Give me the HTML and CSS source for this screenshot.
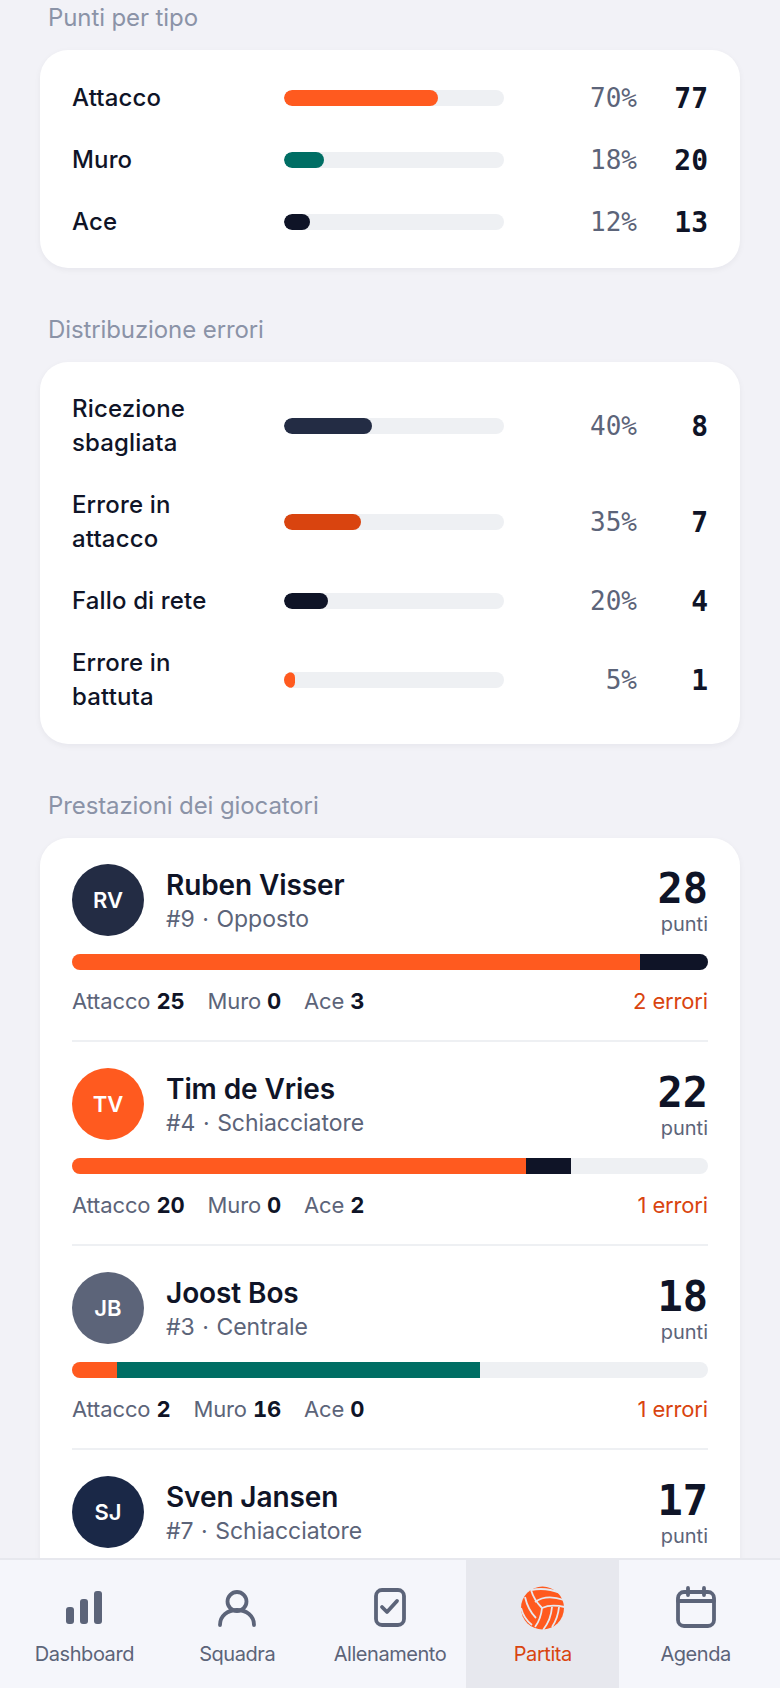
FILE: index.html
```html
<!DOCTYPE html>
<html>

<head>
    <title>Partita</title>
    <link rel="stylesheet" href="styles.css">
</head>

<body>
    <main class="page">
        <h2 class="section-title">Punti per tipo</h2>
        <section class="card stat-card short">
            <div class="stat-row">
                <span class="stat-label">Attacco</span>
                <span class="track"><span class="fill orange" style="width: 70%"></span></span>
                <span class="stat-pct">70%</span>
                <span class="stat-value">77</span>
            </div>
            <div class="stat-row">
                <span class="stat-label">Muro</span>
                <span class="track"><span class="fill teal" style="width: 18%"></span></span>
                <span class="stat-pct">18%</span>
                <span class="stat-value">20</span>
            </div>
            <div class="stat-row">
                <span class="stat-label">Ace</span>
                <span class="track"><span class="fill ink" style="width: 12%"></span></span>
                <span class="stat-pct">12%</span>
                <span class="stat-value">13</span>
            </div>
        </section>

        <h2 class="section-title">Distribuzione errori</h2>
        <section class="card stat-card">
            <div class="stat-row">
                <span class="stat-label">Ricezione sbagliata</span>
                <span class="track"><span class="fill navy" style="width: 40%"></span></span>
                <span class="stat-pct">40%</span>
                <span class="stat-value">8</span>
            </div>
            <div class="stat-row">
                <span class="stat-label">Errore in attacco</span>
                <span class="track"><span class="fill rust" style="width: 35%"></span></span>
                <span class="stat-pct">35%</span>
                <span class="stat-value">7</span>
            </div>
            <div class="stat-row">
                <span class="stat-label">Fallo di rete</span>
                <span class="track"><span class="fill ink" style="width: 20%"></span></span>
                <span class="stat-pct">20%</span>
                <span class="stat-value">4</span>
            </div>
            <div class="stat-row">
                <span class="stat-label">Errore in battuta</span>
                <span class="track"><span class="fill orange" style="width: 5%"></span></span>
                <span class="stat-pct">5%</span>
                <span class="stat-value">1</span>
            </div>
        </section>

        <h2 class="section-title">Prestazioni dei giocatori</h2>
        <section class="card player-card">
            <article class="player">
                <div class="player-head">
                    <span class="avatar av-navy">RV</span>
                    <div class="player-info">
                        <div class="player-name">Ruben Visser</div>
                        <div class="player-role">#9 · Opposto</div>
                    </div>
                    <div class="player-points">
                        <div class="points-num">28</div>
                        <div class="points-label">punti</div>
                    </div>
                </div>
                <div class="split-bar">
                    <span class="orange" style="width: 89.3%"></span>
                    <span class="ink" style="width: 10.7%"></span>
                </div>
                <div class="player-stats">
                    <span>Attacco <b>25</b></span>
                    <span>Muro <b>0</b></span>
                    <span>Ace <b>3</b></span>
                    <span class="errors">2 errori</span>
                </div>
            </article>
            <article class="player">
                <div class="player-head">
                    <span class="avatar orange">TV</span>
                    <div class="player-info">
                        <div class="player-name">Tim de Vries</div>
                        <div class="player-role">#4 · Schiacciatore</div>
                    </div>
                    <div class="player-points">
                        <div class="points-num">22</div>
                        <div class="points-label">punti</div>
                    </div>
                </div>
                <div class="split-bar">
                    <span class="orange" style="width: 71.4%"></span>
                    <span class="ink" style="width: 7.1%"></span>
                </div>
                <div class="player-stats">
                    <span>Attacco <b>20</b></span>
                    <span>Muro <b>0</b></span>
                    <span>Ace <b>2</b></span>
                    <span class="errors">1 errori</span>
                </div>
            </article>
            <article class="player">
                <div class="player-head">
                    <span class="avatar av-slate">JB</span>
                    <div class="player-info">
                        <div class="player-name">Joost Bos</div>
                        <div class="player-role">#3 · Centrale</div>
                    </div>
                    <div class="player-points">
                        <div class="points-num">18</div>
                        <div class="points-label">punti</div>
                    </div>
                </div>
                <div class="split-bar">
                    <span class="orange" style="width: 7.1%"></span>
                    <span class="teal" style="width: 57.1%"></span>
                </div>
                <div class="player-stats">
                    <span>Attacco <b>2</b></span>
                    <span>Muro <b>16</b></span>
                    <span>Ace <b>0</b></span>
                    <span class="errors">1 errori</span>
                </div>
            </article>
            <article class="player">
                <div class="player-head">
                    <span class="avatar av-blue">SJ</span>
                    <div class="player-info">
                        <div class="player-name">Sven Jansen</div>
                        <div class="player-role">#7 · Schiacciatore</div>
                    </div>
                    <div class="player-points">
                        <div class="points-num">17</div>
                        <div class="points-label">punti</div>
                    </div>
                </div>
            </article>
        </section>
    </main>

    <nav class="tabbar">
        <a class="tab">
            <svg class="tab-icon" viewBox="0 0 48 48"><rect x="6" y="23" width="8" height="17" rx="3"/><rect x="20" y="15" width="8" height="25" rx="3"/><rect x="34" y="7" width="8" height="33" rx="3"/></svg>
            <span>Dashboard</span>
        </a>
        <a class="tab">
            <svg class="tab-icon line" viewBox="0 0 48 48"><circle cx="24" cy="17.5" r="9.5"/><path d="M7 41c0-9.4 7.6-15 17-15s17 5.6 17 15"/></svg>
            <span>Squadra</span>
        </a>
        <a class="tab">
            <svg class="tab-icon line" viewBox="0 0 48 48"><rect x="10" y="6" width="28" height="35" rx="6"/><path d="M16 23l5 5 10-11"/></svg>
            <span>Allenamento</span>
        </a>
        <a class="tab active">
            <svg class="tab-icon" viewBox="0 0 48 48"><circle cx="23.5" cy="24" r="21.5" fill="#ff5a1f"/><g fill="none" stroke="#e7e8ee" stroke-width="1.8"><path d="M12 6Q27 3 41 9"/><path d="M16 18Q27 10 45 16"/><path d="M23 24Q32 20 45.500 23"/><path d="M12 6Q15 16 23 24"/><path d="M6 13Q9 26 17 34"/><path d="M2 24Q5 35 13 41"/><path d="M23 24Q22 35 16 43"/><path d="M33 23Q32 36 24 46"/><path d="M40 23Q39 34 33 43"/></g></svg>
            <span>Partita</span>
        </a>
        <a class="tab">
            <svg class="tab-icon line" viewBox="0 0 48 48"><rect x="6" y="8" width="36" height="34" rx="6"/><path d="M6 17h36M16 4v7M32 4v7"/></svg>
            <span>Agenda</span>
        </a>
    </nav>
</body>

</html>
```

FILE: styles.css
```css
* {
    box-sizing: border-box;
}

html,
body {
    margin: 0;
    height: 1688px;
    overflow: hidden;
}

body {
    background-color: #f2f2f7;
    font-family: Inter, sans-serif;
    color: #0f1427;
    position: relative;
}

.page {
    padding: 2px 40px 0;
}

.section-title {
    font-size: 24px;
    font-weight: 400;
    line-height: 32px;
    letter-spacing: -0.1px;
    color: #8b93a7;
    margin: 0 0 16px 8px;
}

.card {
    background-color: white;
    border-radius: 28px;
    box-shadow: 0 2px 6px rgba(15, 20, 39, 0.05);
}

.stat-card {
    display: flex;
    flex-direction: column;
    gap: 28px;
    padding: 30px 32px;
    margin-bottom: 46px;
}

.stat-card.short {
    padding: 31px 32px 29px;
}

.stat-row {
    display: grid;
    grid-template-columns: 212px 220px 1fr 71px;
    align-items: center;
}

.stat-label {
    font-size: 24px;
    font-weight: 550;
    line-height: 34px;
    letter-spacing: 0.15px;
    max-width: 180px;
}

.track {
    display: block;
    height: 16px;
    border-radius: 8px;
    background-color: #eef0f3;
    overflow: hidden;
}

.fill {
    display: block;
    height: 100%;
    border-radius: 8px;
}

.orange {
    background-color: #ff5a1f;
}

.teal {
    background-color: #006e64;
}

.ink {
    background-color: #0f1427;
}

.navy {
    background-color: #232c44;
}

.rust {
    background-color: #d9440f;
}

.stat-pct {
    font-family: 'DejaVu Sans Mono', monospace;
    font-size: 26px;
    color: #5c6479;
    text-align: right;
}

.stat-value {
    font-family: 'DejaVu Sans Mono', monospace;
    font-size: 28px;
    font-weight: 700;
    text-align: right;
}

.player-card {
    padding: 0 32px;
    height: 900px;
}

.player {
    padding: 26px 0 24px;
    border-bottom: 2px solid #eef0f3;
}

.player:last-child {
    border-bottom: none;
}

.player-head {
    display: flex;
    align-items: center;
    gap: 22px;
}

.avatar {
    width: 72px;
    height: 72px;
    border-radius: 50%;
    display: flex;
    align-items: center;
    justify-content: center;
    flex-shrink: 0;
    color: white;
    font-size: 22px;
    font-weight: 600;
}

.av-navy {
    background-color: #232c44;
}

.av-slate {
    background-color: #5c6479;
}

.av-blue {
    background-color: #1a2847;
}

.player-info {
    flex: 1;
    padding-top: 3px;
}

.player-name {
    font-size: 28px;
    font-weight: 570;
    line-height: 36px;
    letter-spacing: -0.1px;
}

.player-role {
    font-size: 23px;
    line-height: 33px;
    letter-spacing: -0.05px;
    word-spacing: 1.2px;
    color: #5c6479;
}

.player-points {
    text-align: right;
    padding-top: 1px;
}

.points-num {
    font-family: 'DejaVu Sans Mono', monospace;
    font-size: 42px;
    font-weight: 700;
    line-height: 48px;
}

.points-label {
    font-size: 20px;
    line-height: 23px;
    color: #5c6479;
}

.split-bar {
    display: flex;
    height: 16px;
    margin-top: 18px;
    border-radius: 8px;
    background-color: #eef0f3;
    overflow: hidden;
}

.player-stats {
    display: flex;
    gap: 23px;
    margin-top: 16px;
    font-size: 22px;
    line-height: 30px;
    letter-spacing: -0.15px;
    color: #5c6479;
}

.player-stats b {
    color: #0f1427;
    font-weight: 650;
    font-variant-numeric: tabular-nums;
}

.errors {
    margin-left: auto;
    color: #d9440f;
}

/* bottom navigation sits over the scrolled content */
.tabbar {
    position: absolute;
    left: 0;
    right: 0;
    bottom: 0;
    height: 130px;
    display: flex;
    padding: 0 8px;
    background-color: #f5f6fb;
    border-top: 2px solid #e7e8ee;
}

.tab {
    flex: 1;
    display: flex;
    flex-direction: column;
    align-items: center;
    padding-top: 24px;
    gap: 8px;
    font-size: 20px;
    line-height: 28px;
    letter-spacing: -0.45px;
    color: #5c6479;
}

.tab.active {
    background-color: #e7e8ee;
    color: #d9440f;
}

.tab-icon {
    width: 48px;
    height: 48px;
    fill: #5c6479;
}

.tab-icon.line {
    fill: none;
    stroke: #5c6479;
    stroke-width: 3.8;
    stroke-linecap: round;
    stroke-linejoin: round;
}
```
